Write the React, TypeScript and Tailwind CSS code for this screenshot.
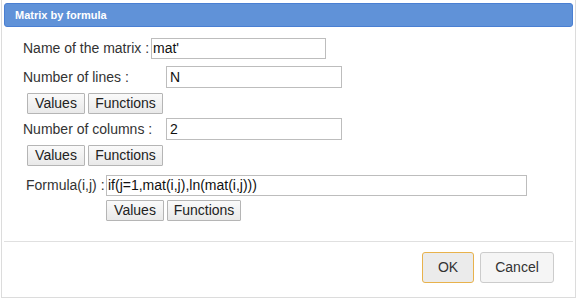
import React from "react";

const Btn = ({ label, w }: { label: string; w: string }) => (
  <button
    className={`h-[21px] ${w} border border-[#b5b5b5] bg-gradient-to-b from-[#fafafa] to-[#e9e9e9] text-[14px] leading-[19px] text-[#222] rounded-[1px]`}
  >
    {label}
  </button>
);

export default function App() {
  return (
    <div
      className="w-[577px] h-[300px] bg-white pl-[1px]"
      style={{ fontFamily: '"Liberation Sans", Arial, sans-serif' }}
    >
      <div className="w-[575px] h-[298px] border-l border-r border-b border-[#dcdcdc] px-[2px] pt-[3px] flex flex-col">
        <div className="h-[24px] bg-[#6092d8] border border-[#4a7fd2] rounded-[3px] flex items-center pl-[10px]">
          <span className="text-white font-bold text-[11px]">Matrix by formula</span>
        </div>

        <div className="flex flex-col text-[14px] text-[#333]">
          <div className="flex items-center mt-[11px] pl-[19px]">
            <span className="w-[128px]">Name of the matrix :</span>
            <div className="w-[175px] h-[21px] border border-[#bdbdbd] pl-[1px] leading-[19px] text-[#111]">mat'</div>
          </div>

          <div className="flex items-center mt-[7px] pl-[19px]">
            <span className="w-[143px]">Number of lines :</span>
            <div className="w-[176px] h-[22px] border border-[#bdbdbd] pl-[3px] leading-[20px] text-[#111]">N</div>
          </div>
          <div className="flex gap-[3px] mt-[5px] pl-[23px]">
            <Btn label="Values" w="w-[58px]" />
            <Btn label="Functions" w="w-[75px]" />
          </div>

          <div className="flex items-center mt-[4px] pl-[19px]">
            <span className="w-[143px]">Number of columns :</span>
            <div className="w-[176px] h-[22px] border border-[#bdbdbd] pl-[3px] leading-[20px] text-[#111]">2</div>
          </div>
          <div className="flex gap-[3px] mt-[5px] pl-[23px]">
            <Btn label="Values" w="w-[58px]" />
            <Btn label="Functions" w="w-[75px]" />
          </div>

          <div className="flex items-center mt-[9px] pl-[22px]">
            <span className="w-[80px]">Formula(i,j) :</span>
            <div className="w-[421px] h-[21px] border border-[#bdbdbd] pl-[1px] leading-[19px] text-[#111]">if(j=1,mat(i,j),ln(mat(i,j)))</div>
          </div>
          <div className="flex gap-[3px] mt-[4px] pl-[102px]">
            <Btn label="Values" w="w-[58px]" />
            <Btn label="Functions" w="w-[74px]" />
          </div>
        </div>

        <div className="mt-[20px] h-[1px] bg-[#e0e0e0]" />

        <div className="flex justify-end gap-[6px] pr-[19px] mt-[10px]">
          <button className="w-[52px] h-[31px] border border-[#e8b24c] bg-[#ebebeb] rounded-[3px] text-[14px] text-[#333]">OK</button>
          <button className="w-[74px] h-[31px] border border-[#cccccc] bg-[#f5f5f5] rounded-[3px] text-[14px] text-[#333]">Cancel</button>
        </div>
      </div>
    </div>
  );
}
